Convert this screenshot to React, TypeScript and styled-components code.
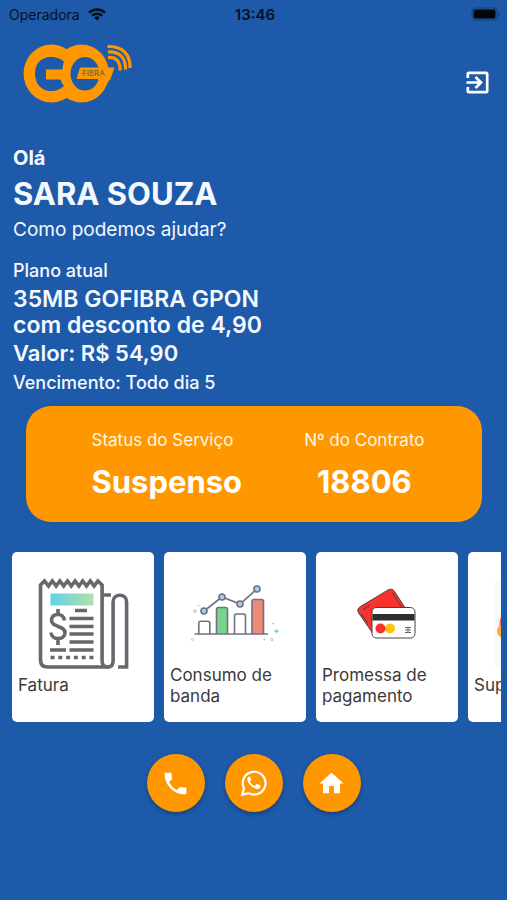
import React from "react";
import styled, { createGlobalStyle } from "styled-components";
import { MdHome } from "react-icons/md";

const BLUE = "#1d5aa9";
const ORANGE = "#ff9800";

const GlobalStyle = createGlobalStyle`
  *, *::before, *::after { box-sizing: border-box; }
  body {
    margin: 0;
    background: ${BLUE};
    color: #f4f8ff;
    font-family: Inter, "Liberation Sans", sans-serif;
  }
`;

const Screen = styled.div`
  min-height: 100vh;
  overflow: hidden;
  display: flex;
  flex-direction: column;
`;

const StatusBar = styled.div`
  display: grid;
  grid-template-columns: 1fr auto 1fr;
  align-items: center;
  height: 28px;
  padding: 0 6px 0 9px;
  color: #07101f;
  font-size: 14px;
`;

const Carrier = styled.span`
  display: flex;
  align-items: center;
  gap: 8px;
`;

const Clock = styled.span`
  font-size: 15px;
  font-weight: 600;
`;

const BatterySlot = styled.span`
  justify-self: end;
  display: flex;
`;

const Header = styled.header`
  display: flex;
  justify-content: space-between;
  align-items: flex-start;
  padding: 14px 15px 0 22px;
  height: 118px;
`;

const IconButton = styled.button`
  display: flex;
  margin-top: 26px;
  padding: 0;
  border: 0;
  background: none;
  color: #fff;
  cursor: pointer;
`;

const Intro = styled.section`
  display: flex;
  flex-direction: column;
  padding: 0 13px;
`;

const Line = styled.p<{ $size: number; $height: number; $weight?: number }>`
  margin: 0;
  font-size: ${(p) => p.$size}px;
  line-height: ${(p) => p.$height}px;
  font-weight: ${(p) => p.$weight ?? 400};
`;

const Name = styled.h1`
  margin: 0;
  font-size: 31px;
  line-height: 48px;
  font-weight: 700;
`;

const Plan = styled.div`
  margin-top: 14px;
`;

const Contract = styled.dl`
  display: flex;
  justify-content: center;
  gap: 62px;
  margin: 8px 25px 0 26px;
  padding: 20px 0 20px 8px;
  border-radius: 25px;
  background: ${ORANGE};
`;

const Fact = styled.div<{ $align: "flex-start" | "center" }>`
  display: flex;
  flex-direction: column;
  align-items: ${(p) => p.$align};
`;

const FactLabel = styled.dt`
  font-size: 17px;
  line-height: 28px;
  color: #fff6e0;
`;

const FactValue = styled.dd`
  margin: 8px 0 0;
  font-size: 31px;
  line-height: 40px;
  font-weight: 700;
  color: #fff;
`;

const Carousel = styled.nav`
  display: flex;
  gap: 10px;
  margin: 30px 6px 0;
  padding-left: 6px;
  overflow: hidden;
`;

const Tile = styled.button`
  flex: none;
  display: flex;
  flex-direction: column;
  justify-content: center;
  width: 142px;
  height: 170px;
  padding: 0 6px 3px;
  border: 0;
  border-radius: 5px;
  background: #fff;
  color: #3a3a3a;
  font: 17px/21px Inter, "Liberation Sans", sans-serif;
  text-align: left;
  cursor: pointer;
`;

const Picture = styled.svg`
  display: block;
  flex: none;
  align-self: center;
  width: 100px;
  height: 100px;
`;

const Actions = styled.footer`
  display: flex;
  justify-content: center;
  gap: 20px;
  margin-top: 32px;
`;

const RoundButton = styled.button`
  display: flex;
  align-items: center;
  justify-content: center;
  width: 58px;
  height: 58px;
  padding: 0;
  border: 0;
  border-radius: 50%;
  background: ${ORANGE};
  color: #fff;
  box-shadow: 0 2px 4px rgba(0, 0, 0, 0.3);
  cursor: pointer;
`;

function Logo() {
  return (
    <svg width="112" height="62" viewBox="22 42 112 62" role="img" aria-label="GO Fibra">
      <g fill={ORANGE}>
        <ellipse cx="51.500" cy="73.500" rx="28" ry="29" />
        <ellipse cx="81.500" cy="73.500" rx="27.500" ry="29" />
      </g>
      <g fill={BLUE}>
        <path d="M62.500 69.500H46v10h14.500q1 3.500 3.500 6.500-5 5-13 5c-10 0-16-7.500-16-17.500s6-16.500 16-16.500q8 0 13 4.500-1.500 3.500-1.500 8z" />
        <ellipse cx="85" cy="73.800" rx="14.500" ry="16.800" />
      </g>
      <path d="M80 67.500H114.500L110.500 79l-5 6-8-6H76.500z" fill={ORANGE} />
      <text x="82" y="76" fontSize="8" fill="#5f5a50" fontFamily="Inter, sans-serif">FIBRA</text>
      <g fill="none" stroke={ORANGE} strokeWidth="3.200">
        <path d="M108 57.500c8-.5 12.500 4 12 13" />
        <path d="M108 52c12-.5 18 6 17.500 17.500" />
        <path d="M107.500 46.500c15-.5 23 8 22.500 21.500" />
      </g>
    </svg>
  );
}

function Wifi() {
  return (
    <svg width="18" height="13" viewBox="0 0 18 13" aria-hidden="true">
      <g fill="none" stroke="#07101f" strokeWidth="2.500">
        <path d="M1 4.700a11.500 11.500 0 0 1 16 0" />
        <path d="M3.900 7.700a7.400 7.400 0 0 1 10.200 0" />
      </g>
      <path d="M9 12.500 6.200 9.700a4 4 0 0 1 5.600 0z" fill="#07101f" />
    </svg>
  );
}

function Battery() {
  return (
    <svg width="30" height="14" viewBox="0 0 30 14" aria-hidden="true">
      <rect x="1" y="1" width="25" height="12" rx="3.500" fill="none" stroke="#143c70" />
      <rect x="2.500" y="2.500" width="22" height="9" rx="2" fill="#02060c" />
      <path d="M27.500 5v4q1.500-.5 1.500-2t-1.500-2z" fill="#143c70" />
    </svg>
  );
}

function Exit() {
  return (
    <svg width="29" height="29" viewBox="0 0 29 29" fill="none" stroke="currentColor" strokeWidth="2.700" aria-hidden="true">
      <path d="M4.800 10V5.800q0-1 1-1h17.400q1 0 1 1v17.400q0 1-1 1H5.800q-1 0-1-1V19" />
      <path d="M3.500 14.500h14M12.500 9l5.500 5.500-5.500 5.500" />
    </svg>
  );
}

function InvoicePicture() {
  return (
    <Picture viewBox="0 0 100 100" aria-hidden="true">
      <defs>
        <linearGradient id="banner">
          <stop offset="0" stopColor="#5fd3e6" />
          <stop offset="1" stopColor="#b4e0a8" />
        </linearGradient>
      </defs>
      <rect x="17.500" y="18.500" width="43" height="12" fill="url(#banner)" />
      <g fill="none" stroke="#65696d" strokeWidth="3.600">
        <path d="M7.500 86V10l4-4 4 5 3.800-5 3.800 5 3.800-5 3.800 5 3.800-5 3.800 5 3.800-5 3.800 5 3.800-5 3.800 5 3.800-5 3.800 5 3.800-5 4.200 4v76c0 4 2 6 5.500 6s5.500-2 5.500-6V27c0-9 13.500-9 13.500 0v65h-8.500" />
        <path d="M7.500 85q0 7 7 7h62M70 20h8" />
        <path d="M42 35.500h12M36.500 43.500h24M36.500 51.500h24M36.500 59h24M36.500 67h24M36.500 75h24M17 75h16" />
        <path d="M17.500 82.500h44" strokeDasharray="4 3.800" />
        <path d="M25 34v6M25 63v7M31.500 45.500q-1-6-6.500-6-6.500 0-6.500 6c0 7 13.500 5 13.500 12 0 8-13.500 8-14 0" />
      </g>
    </Picture>
  );
}

function UsagePicture() {
  const points = [[19, 46], [37, 32], [55, 39], [72, 24]];
  return (
    <Picture viewBox="0 0 100 100" aria-hidden="true">
      <g stroke="#70717f" strokeWidth="1.600">
        <path d="M13.800 69V58q0-1.800 2-1.800h7q2 0 2 1.800v11" fill="#fff" />
        <path d="M31.500 69V44.500q0-2 2-2h7q2 0 2 2V69" fill="#78d58c" />
        <path d="M49.500 69V51q0-2 2-2h7q2 0 2 2v18" fill="#fff" />
        <path d="M67 69V36.500q0-2 2-2h7.500q2 0 2 2V69" fill="#f08a78" />
        <path d="M9.500 69H83M19 46l18-14 18 7 17-15" fill="none" />
        {points.map(([x, y]) => (
          <circle key={x} cx={x} cy={y} r="3" fill="#a5cdf5" />
        ))}
      </g>
      <g fill="none" stroke="#bcbcbc">
        <circle cx="10" cy="46" r="1.300" />
        <circle cx="7.500" cy="74.500" r="1" />
        <circle cx="13.500" cy="40.500" r=".5" />
        <circle cx="79.500" cy="74.500" r=".6" />
        <circle cx="87" cy="74.500" r="1.200" />
        <circle cx="88" cy="58.500" r=".6" />
        <path d="M91.500 64.200v4M89.500 66.200h4" stroke="#7fc4e8" strokeWidth="1.500" />
      </g>
    </Picture>
  );
}

function CardsPicture() {
  return (
    <Picture viewBox="0 0 100 100" aria-hidden="true">
      <g stroke="#444">
        <path d="M23.500 41.500 51 25q4-2.300 6.500 1.500l13 20L38 71.500 22 48.500q-3-4.500 1.500-7z" fill="#f9312f" />
        <path d="M26 44.500 33 40M24.500 49l6 9M55 27.500l10 15" fill="none" />
        <rect x="35" y="42.500" width="43" height="30.500" rx="4.500" fill="#fff" />
      </g>
      <path d="M35.500 49h42v6.500h-42z" fill="#2e2e30" />
      <circle cx="53" cy="63.500" r="5" fill="#ffc20f" />
      <circle cx="43.500" cy="63.500" r="5" fill="#f9312f" />
      <path d="M68 62.500h6M68 65h6M68 67.500h6M71 62v6" stroke="#666" />
    </Picture>
  );
}

function SupportPicture() {
  return (
    <Picture viewBox="0 0 100 100" aria-hidden="true">
      <defs>
        <pattern id="dots" width="4" height="4" patternUnits="userSpaceOnUse">
          <path d="M0 0h2v2H0zM2 2h2v2H2z" fill="#f1f1f1" />
        </pattern>
      </defs>
      <rect x="6" y="5" width="88" height="88" fill="url(#dots)" />
      <path d="M10.500 52q-1-18 20-28h40v50H20z" fill="#ee6253" />
      <circle cx="15" cy="56" r="7" fill="#f8ad3c" />
    </Picture>
  );
}

function Phone() {
  return (
    <svg width="29" height="29" viewBox="0 0 24 24" fill="currentColor" aria-hidden="true">
      <path d="m21 15.460-5.270-.610-2.520 2.520a15.045 15.045 0 0 1-6.590-6.590l2.530-2.530L8.540 3H3.030C2.450 13.180 10.820 21.550 21 20.970z" />
    </svg>
  );
}

function WhatsApp() {
  return (
    <svg width="28" height="28" viewBox="0 0 28 28" aria-hidden="true">
      <path d="M2.200 25.800 4 19.400a11.400 11.400 0 1 1 4.500 4.700z" fill="none" stroke="#fff" strokeWidth="2.200" />
      <path d="M10.300 8.300c-.5-1-1-.9-1.600-.6-2.600 2-1.200 5.500 1.600 8.300 3.300 3.400 7.400 5.400 9.600 3 1-1 .9-2.200.5-2.500l-2.900-1.500c-.5-.2-.8-.1-1.100.3l-1 1.300c-.3.400-.6.400-1.100.2-1.900-.9-3.300-2.200-4.200-3.900-.3-.5 0-.8.200-1l.7-.9c.2-.3.300-.6.100-1z" fill="#fff" />
    </svg>
  );
}

const tiles = [
  { label: "Fatura", picture: <InvoicePicture /> },
  { label: "Consumo de banda", picture: <UsagePicture /> },
  { label: "Promessa de pagamento", picture: <CardsPicture /> },
  { label: "Suporte", picture: <SupportPicture /> },
];

export default function App() {
  return (
    <Screen>
      <GlobalStyle />
      <StatusBar>
        <Carrier>Operadora <Wifi /></Carrier>
        <Clock>13:46</Clock>
        <BatterySlot><Battery /></BatterySlot>
      </StatusBar>
      <Header>
        <Logo />
        <IconButton aria-label="Sair"><Exit /></IconButton>
      </Header>
      <main>
        <Intro>
          <Line $size={20} $height={24} $weight={700}>Olá</Line>
          <Name>SARA SOUZA</Name>
          <Line $size={19} $height={24}>Como podemos ajudar?</Line>
          <Plan>
            <Line $size={18} $height={30} $weight={500}>Plano atual</Line>
            <Line $size={23} $height={26} $weight={600}>35MB GOFIBRA GPON<br />com desconto de 4,90</Line>
            <Line $size={22} $height={30} $weight={600}>Valor: R$ 54,90</Line>
            <Line $size={18} $height={30} $weight={500}>Vencimento: Todo dia 5</Line>
          </Plan>
        </Intro>
        <Contract>
          <Fact $align="flex-start">
            <FactLabel>Status do Serviço</FactLabel>
            <FactValue>Suspenso</FactValue>
          </Fact>
          <Fact $align="center">
            <FactLabel>Nº do Contrato</FactLabel>
            <FactValue>18806</FactValue>
          </Fact>
        </Contract>
        <Carousel aria-label="Serviços">
          {tiles.map((t) => (
            <Tile key={t.label}>
              {t.picture}
              <span>{t.label}</span>
            </Tile>
          ))}
        </Carousel>
      </main>
      <Actions>
        <RoundButton aria-label="Telefone"><Phone /></RoundButton>
        <RoundButton aria-label="WhatsApp"><WhatsApp /></RoundButton>
        <RoundButton aria-label="Início"><MdHome size={29} /></RoundButton>
      </Actions>
    </Screen>
  );
}
